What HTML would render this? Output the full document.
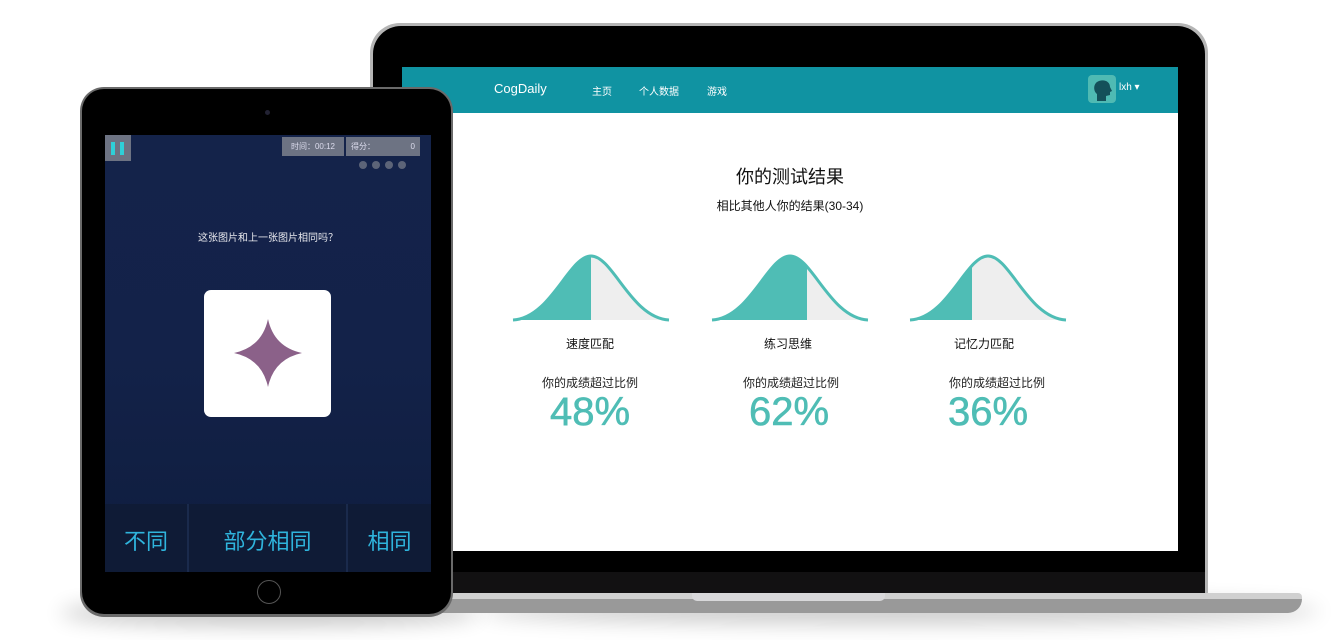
<!DOCTYPE html>
<html><head><meta charset="utf-8"><style>
*{margin:0;padding:0;box-sizing:border-box}
body{width:1334px;height:640px;background:#fff;position:relative;overflow:hidden;font-family:"Liberation Sans","Noto Sans CJK SC",sans-serif}
.a{position:absolute}
</style></head><body>
<div class="a" style="left:60px;top:600px;width:420px;height:26px;border-radius:50%;background:#000;opacity:.22;filter:blur(10px)"></div>
<div class="a" style="left:480px;top:598px;width:840px;height:26px;border-radius:50%;background:#000;opacity:.2;filter:blur(10px)"></div>
<div class="a" style="left:370px;top:23px;width:838px;height:572px;border-radius:30px 30px 0 0;background:#b5b5b5"></div>
<div class="a" style="left:373px;top:26px;width:832px;height:568px;border-radius:28px 28px 0 0;background:#000"></div>
<div class="a" style="left:373px;top:572px;width:832px;height:22px;background:#121112"></div>
<div class="a" style="left:440px;top:593px;width:862px;height:6px;background:#d0d0d0;border-radius:0 4px 0 0"></div>
<div class="a" style="left:440px;top:599px;width:862px;height:14px;background:#999;border-radius:0 0 60px 0"></div>
<div class="a" style="left:692px;top:593px;width:193px;height:8px;background:#d8d8da;border-radius:0 0 5px 5px"></div>
<div class="a" style="left:402px;top:67px;width:776px;height:484px;background:#fff"></div>
<div class="a" style="left:402px;top:67px;width:776px;height:46px;background:#1093a2;color:#fff">
  <div class="a" style="left:92px;top:14px;font-size:13px">CogDaily</div>
  <div class="a" style="left:190px;top:16px;font-size:10px">主页</div>
  <div class="a" style="left:237px;top:16px;font-size:10px">个人数据</div>
  <div class="a" style="left:305px;top:16px;font-size:10px">游戏</div>
  <div class="a" style="left:686px;top:8px;width:28px;height:28px;border-radius:4px;background:#4fbab3"></div>
  <svg class="a" style="left:686px;top:8px" width="28" height="28"><path d="M9 26 L9 19 C5 16 5 8 11 6 C17 4 22 7 22 12 L24 16 L22 17 L22 20 L18 21 L18 26Z" fill="#14505a"/></svg>
  <div class="a" style="left:717px;top:15px;font-size:10px">lxh ▾</div>
</div>
<div class="a" style="left:402px;top:163px;width:776px;text-align:center;font-size:18px;color:#111">你的测试结果</div>
<div class="a" style="left:402px;top:197px;width:776px;text-align:center;font-size:12px;color:#111">相比其他人你的结果(30-34)</div>
<svg class="a" style="left:0;top:0" width="1334" height="640">
 <defs><path id="c" d="M0 64 C38 62 56 0 78 0 C100 0 118 62 156 64Z"/>
 <clipPath id="k1"><rect x="0" y="-5" width="78" height="80"/></clipPath>
 <clipPath id="k2"><rect x="0" y="-5" width="95" height="80"/></clipPath>
 <clipPath id="k3"><rect x="0" y="-5" width="62" height="80"/></clipPath></defs>
 <g transform="translate(513,256)"><use href="#c" fill="#eee"/><use href="#c" fill="#4fbdb5" clip-path="url(#k1)"/><path d="M0 64 C38 62 56 0 78 0 C100 0 118 62 156 64" fill="none" stroke="#4fbdb5" stroke-width="3"/></g>
 <g transform="translate(712,256)"><use href="#c" fill="#eee"/><use href="#c" fill="#4fbdb5" clip-path="url(#k2)"/><path d="M0 64 C38 62 56 0 78 0 C100 0 118 62 156 64" fill="none" stroke="#4fbdb5" stroke-width="3"/></g>
 <g transform="translate(910,256)"><use href="#c" fill="#eee"/><use href="#c" fill="#4fbdb5" clip-path="url(#k3)"/><path d="M0 64 C38 62 56 0 78 0 C100 0 118 62 156 64" fill="none" stroke="#4fbdb5" stroke-width="3"/></g>
</svg>
<div class="a" style="left:530px;top:335px;width:120px;text-align:center;font-size:12px;color:#111">速度匹配</div>
<div class="a" style="left:728px;top:335px;width:120px;text-align:center;font-size:12px;color:#111">练习思维</div>
<div class="a" style="left:924px;top:335px;width:120px;text-align:center;font-size:12px;color:#111">记忆力匹配</div>
<div class="a" style="left:530px;top:374px;width:120px;text-align:center;font-size:12px;color:#222">你的成绩超过比例</div>
<div class="a" style="left:731px;top:374px;width:120px;text-align:center;font-size:12px;color:#222">你的成绩超过比例</div>
<div class="a" style="left:937px;top:374px;width:120px;text-align:center;font-size:12px;color:#222">你的成绩超过比例</div>
<div class="a" style="left:530px;top:390px;width:120px;text-align:center;font-size:40px;color:#4fbdb5;-webkit-text-stroke:0.6px #4fbdb5">48%</div>
<div class="a" style="left:729px;top:390px;width:120px;text-align:center;font-size:40px;color:#4fbdb5;-webkit-text-stroke:0.6px #4fbdb5">62%</div>
<div class="a" style="left:928px;top:390px;width:120px;text-align:center;font-size:40px;color:#4fbdb5;-webkit-text-stroke:0.6px #4fbdb5">36%</div>
<div class="a" style="left:80px;top:87px;width:373px;height:530px;border-radius:24px;background:#6a6a6a"></div>
<div class="a" style="left:82px;top:89px;width:369px;height:525px;border-radius:22px;background:#000"></div>
<div class="a" style="left:265px;top:110px;width:5px;height:5px;border-radius:50%;background:#223"></div>
<div class="a" style="left:257px;top:580px;width:24px;height:24px;border-radius:50%;border:1px solid #555"></div>
<div class="a" style="left:105px;top:135px;width:326px;height:437px;background:linear-gradient(#14234a,#132249 50%,#0f1d3e)"></div>
<div class="a" style="left:105px;top:135px;width:26px;height:26px;background:#6d7383"></div>
<div class="a" style="left:111px;top:142px;width:4px;height:13px;background:#2fd0d8"></div>
<div class="a" style="left:120px;top:142px;width:4px;height:13px;background:#2fd0d8"></div>
<div class="a" style="left:282px;top:137px;width:62px;height:19px;background:#6d7383;color:#dde;font-size:8px;line-height:19px;text-align:center">时间：00:12</div>
<div class="a" style="left:346px;top:137px;width:74px;height:19px;background:#6d7383;color:#dde;font-size:8px;line-height:19px;padding:0 5px">得分：<span style="float:right">0</span></div>
<div class="a" style="left:359px;top:161px;width:8px;height:8px;border-radius:50%;background:#5c6478"></div>
<div class="a" style="left:372px;top:161px;width:8px;height:8px;border-radius:50%;background:#5c6478"></div>
<div class="a" style="left:385px;top:161px;width:8px;height:8px;border-radius:50%;background:#5c6478"></div>
<div class="a" style="left:398px;top:161px;width:8px;height:8px;border-radius:50%;background:#5c6478"></div>
<div class="a" style="left:105px;top:229px;width:326px;text-align:center;color:#e8e8ee;font-size:10px">这张图片和上一张图片相同吗？</div>
<div class="a" style="left:204px;top:290px;width:127px;height:127px;background:#fff;border-radius:7px"></div>
<svg class="a" style="left:230px;top:315px" width="76" height="76"><path d="M38 4 Q44 32 72 38 Q44 44 38 72 Q32 44 4 38 Q32 32 38 4Z" fill="#8b6189"/></svg>
<div class="a" style="left:105px;top:504px;width:326px;height:68px;background:#0f1b36"></div>
<div class="a" style="left:187px;top:504px;width:2px;height:68px;background:#1a2a4c"></div>
<div class="a" style="left:346px;top:504px;width:2px;height:68px;background:#1a2a4c"></div>
<div class="a" style="left:105px;top:524px;width:82px;text-align:center;color:#2fb4dc;font-size:22px">不同</div>
<div class="a" style="left:189px;top:524px;width:157px;text-align:center;color:#2fb4dc;font-size:22px">部分相同</div>
<div class="a" style="left:348px;top:524px;width:83px;text-align:center;color:#2fb4dc;font-size:22px">相同</div>
</body></html>
